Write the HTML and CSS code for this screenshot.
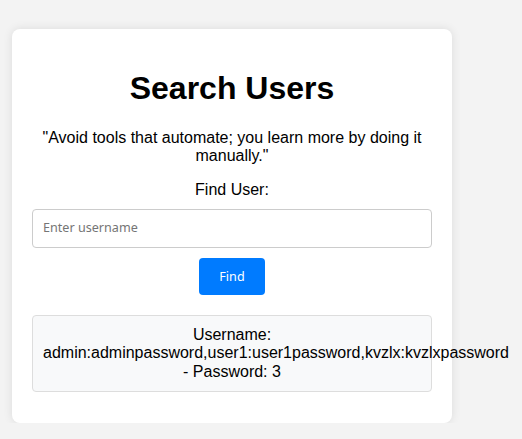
FILE: index.html
```html
<!DOCTYPE html>
<html lang="en">
<head>
<meta charset="utf-8">
<title>Search Users</title>
<link rel="stylesheet" href="styles.css">
</head>
<body>
<div class="card">
  <h1 class="title">Search Users</h1>
  <p class="quote">"Avoid tools that automate; you learn more by doing it manually."</p>
  <form class="search-form">
    <label class="label" for="username">Find User:</label>
    <input class="input" type="text" id="username" name="username" placeholder="Enter username">
    <button class="btn" type="button">Find</button>
  </form>
  <div class="result">Username: admin:adminpassword,user1:user1password,kvzlx:kvzlxpassword - Password: 3</div>
</div>
</body>
</html>
```
FILE: styles.css
```css
html, body {
  margin: 0;
  padding: 0;
}
body {
  background: #f3f3f3;
  font-family: "Liberation Sans", Arial, sans-serif;
  color: #000;
  padding: 29px 0 0 12px;
}
.card {
  width: 400px;
  padding: 20px;
  background: #fff;
  border-radius: 8px;
  box-shadow: 0 0 10px rgba(0, 0, 0, 0.1);
  text-align: center;
}
.title {
  font-size: 32px;
  margin: 21.44px 0;
}
.quote {
  font-size: 16px;
  margin: 0 0 16px;
}
.search-form {
  display: flex;
  flex-direction: column;
  align-items: center;
  gap: 10px;
}
.label {
  font-size: 16px;
  line-height: 18.4px;
}
.input {
  width: 100%;
  box-sizing: border-box;
  padding: 10px 10px;
  border: 1px solid #ccc;
  border-radius: 4px;
  font-family: "Noto Sans", sans-serif;
  font-size: 12.6px;
  line-height: 16.4px;
  color: #333;
}
.input::placeholder {
  color: #757575;
}
.btn {
  padding: 10px 20px;
  background: #007bff;
  color: #fff;
  border: none;
  border-radius: 4px;
  font-family: "Noto Sans", sans-serif;
  font-size: 12.6px;
  line-height: 17px;
  cursor: pointer;
}
.result {
  margin: 20px 0 11px;
  padding: 10px;
  background: #f8f9fa;
  border: 1px solid #ddd;
  border-radius: 4px;
  font-size: 16px;
  line-height: 18.6px;
}
```
